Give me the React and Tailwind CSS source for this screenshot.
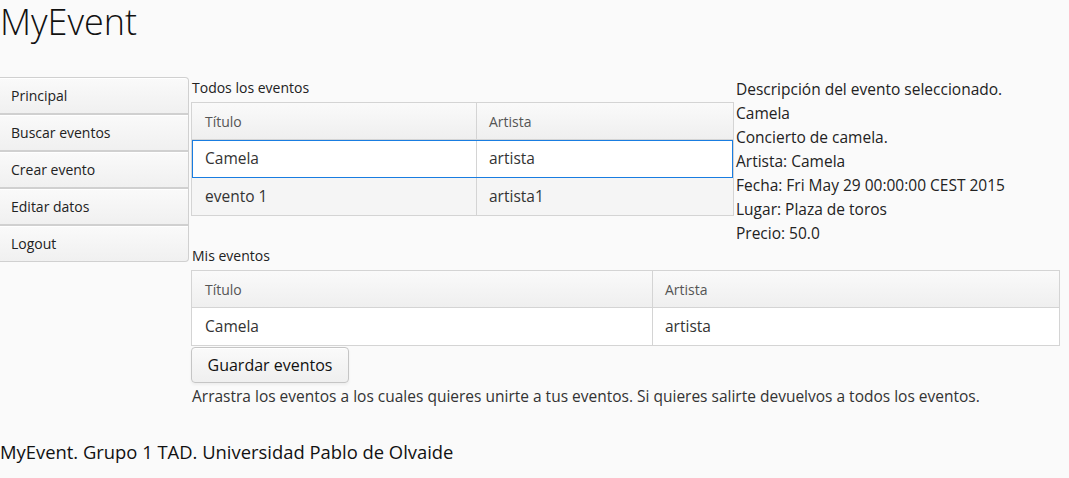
export default function App() {
  const menu = ["Principal", "Buscar eventos", "Crear evento", "Editar datos", "Logout"];
  const desc = [
    "Descripción del evento seleccionado.",
    "Camela",
    "Concierto de camela.",
    "Artista: Camela",
    "Fecha: Fri May 29 00:00:00 CEST 2015",
    "Lugar: Plaza de toros",
    "Precio: 50.0",
  ];
  const font = { fontFamily: '"Open Sans", "Noto Sans", sans-serif' };
  return (
    <div className="min-h-[478px] w-[1069px] bg-[#fafafa] text-[#333]" style={font}>
      <h1 className="text-[36px] leading-[44px] font-light text-[#111] m-0">MyEvent</h1>
      <div className="mt-[33px] flex gap-[2px]">
        {/* menu */}
        <div className="w-[189px] flex flex-col">
          {menu.map((m, i) => (
            <div
              key={m}
              className={
                "h-[37px] flex items-center pl-[11px] text-[14px] text-[#222] border border-l-0 border-[#d0d0d0] bg-gradient-to-b from-[#fafafa] to-[#f0f0f0] shadow-[inset_0_1px_0_#fff] " +
                (i === 0 ? "rounded-tr-[4px] " : "") +
                (i === menu.length - 1 ? "rounded-br-[4px] " : "")
              }
            >
              {m}
            </div>
          ))}
        </div>
        {/* content */}
        <div className="w-[869px] flex flex-col">
          <div className="flex gap-[2px]">
            <div className="w-[543px] flex flex-col">
              <div className="h-[25px] text-[14px] leading-[22px] pl-px text-[#222]">Todos los eventos</div>
              <div className="border border-[#d4d4d4] bg-white">
                <div className="flex h-[37px] border-b border-[#d4d4d4] bg-gradient-to-b from-[#fafafa] to-[#efefef] text-[14px] text-[#555]">
                  <div className="w-[285px] border-r border-[#d4d4d4] flex items-center pl-[13px]">Título</div>
                  <div className="flex-1 flex items-center pl-[12px]">Artista</div>
                </div>
                <div className="flex h-[38px] text-[15.5px] bg-white outline outline-1 outline-[#197de1] -outline-offset-1 relative">
                  <div className="w-[285px] border-r border-[#d4d4d4] flex items-center pl-[13px]">Camela</div>
                  <div className="flex-1 flex items-center pl-[12px]">artista</div>
                </div>
                <div className="flex h-[37px] text-[15.5px] bg-[#f5f5f5]">
                  <div className="w-[285px] border-r border-[#d4d4d4] flex items-center pl-[13px]">evento 1</div>
                  <div className="flex-1 flex items-center pl-[12px]">artista1</div>
                </div>
              </div>
            </div>
            <div className="flex-1 text-[15.5px] leading-[24px] text-[#222]">
              {desc.map((d) => (
                <div key={d}>{d}</div>
              ))}
            </div>
          </div>
          <div className="h-[25px] text-[14px] leading-[22px] pl-px text-[#222]">Mis eventos</div>
          <div className="border border-[#d4d4d4] bg-white">
            <div className="flex h-[37px] border-b border-[#d4d4d4] bg-gradient-to-b from-[#fafafa] to-[#efefef] text-[14px] text-[#555]">
              <div className="w-[461px] border-r border-[#d4d4d4] flex items-center pl-[13px]">Título</div>
              <div className="flex-1 flex items-center pl-[12px]">Artista</div>
            </div>
            <div className="flex h-[37px] text-[15.5px] bg-white">
              <div className="w-[461px] border-r border-[#d4d4d4] flex items-center pl-[13px]">Camela</div>
              <div className="flex-1 flex items-center pl-[12px]">artista</div>
            </div>
          </div>
          <div className="mt-px">
            <button className="h-[36px] w-[158px] rounded-[4px] border border-[#c5c5c5] bg-gradient-to-b from-[#fafafa] to-[#efefef] shadow-[0_2px_3px_rgba(0,0,0,0.05),inset_0_1px_0_#fff] text-[16px] text-[#111]">
              Guardar eventos
            </button>
          </div>
          <div className="mt-[1px] text-[15.5px] leading-[24px] pl-px text-[#333]">
            Arrastra los eventos a los cuales quieres unirte a tus eventos. Si quieres salirte devuelvos a todos los eventos.
          </div>
        </div>
      </div>
      <div className="mt-[32px] text-[18.4px] leading-[24px] text-[#111]">MyEvent. Grupo 1 TAD. Universidad Pablo de Olvaide</div>
    </div>
  );
}
